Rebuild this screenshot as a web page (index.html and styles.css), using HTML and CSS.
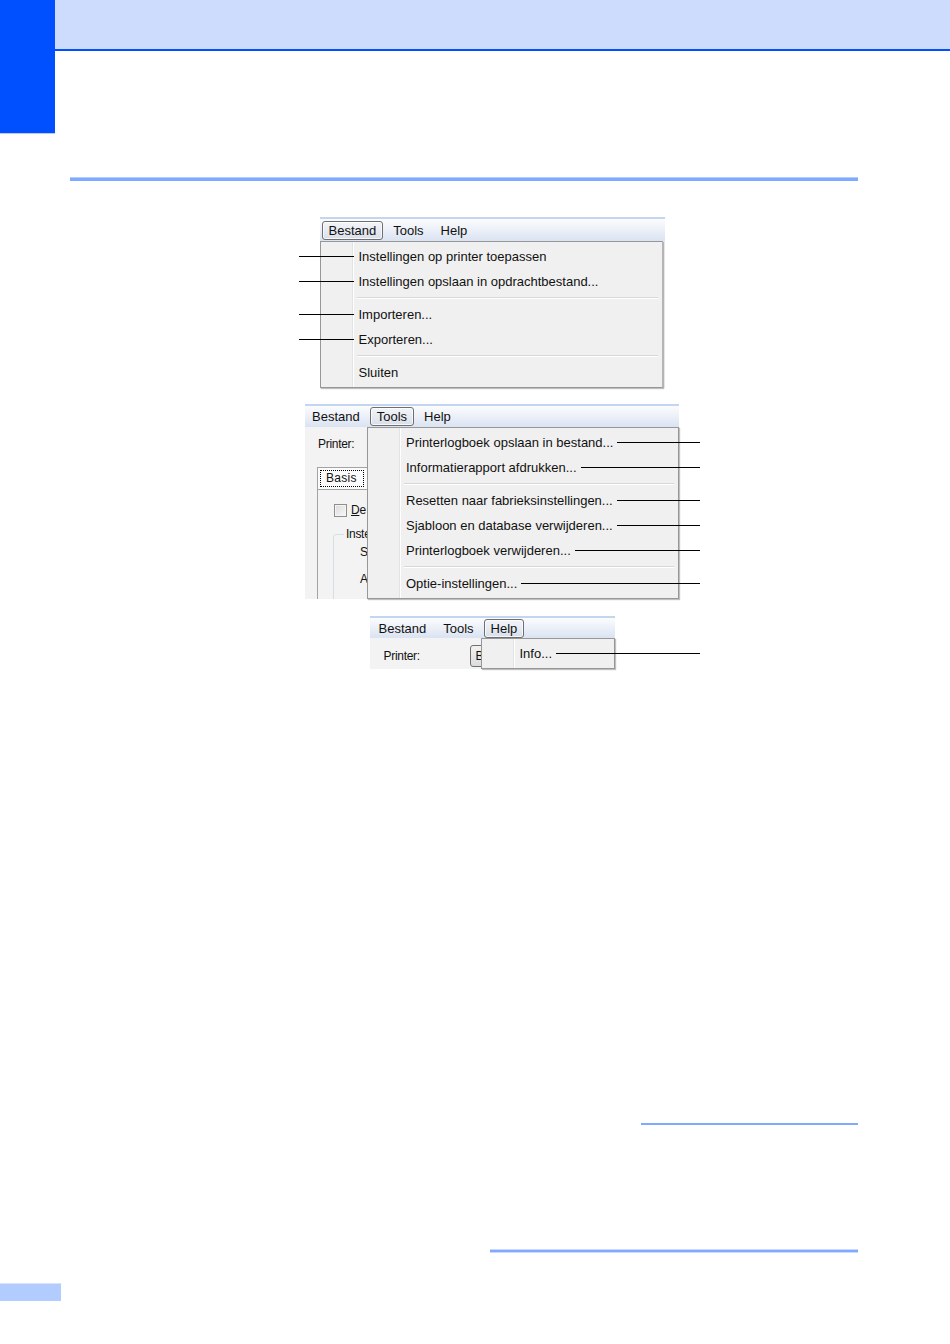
FILE: index.html
```html
<!DOCTYPE html>
<html lang="nl">
<head>
  <meta charset="UTF-8">
  <meta name="viewport" content="width=device-width, initial-scale=1.0">
  <title>Menu's - Printerinstellingen</title>
  <link rel="stylesheet" href="styles.css">
</head>
<body>
  <header class="page-head">
    <div class="chapter-tab"></div>
    <div class="head-band"></div>
  </header>

  <div class="section-rule"></div>

  <main class="figures">
    <!-- Bestand menu -->
    <div class="shot shot-file">
      <div class="menubar">
        <span class="mb-item active">Bestand</span>
        <span class="mb-item">Tools</span>
        <span class="mb-item">Help</span>
      </div>
      <div class="dropdown">
        <div class="mi lead"><span class="callout"></span><span>Instellingen op printer toepassen</span></div>
        <div class="mi lead"><span class="callout"></span><span>Instellingen opslaan in opdrachtbestand...</span></div>
        <div class="msep"></div>
        <div class="mi lead"><span class="callout"></span><span>Importeren...</span></div>
        <div class="mi lead"><span class="callout"></span><span>Exporteren...</span></div>
        <div class="msep"></div>
        <div class="mi"><span>Sluiten</span></div>
      </div>
    </div>

    <!-- Tools menu -->
    <div class="shot shot-tools">
      <div class="menubar">
        <span class="mb-item">Bestand</span>
        <span class="mb-item active">Tools</span>
        <span class="mb-item">Help</span>
      </div>
      <div class="shot-body">
        <div class="pane">
          <div class="label-row">Printer:</div>
          <div class="tab"><span class="focus">Basis</span></div>
          <div class="tab-page">
            <div class="check-row"><span class="checkbox"></span><span><u>D</u>e</span></div>
            <fieldset class="group">
              <legend>Inste</legend>
              <div class="group-row">S</div>
              <div class="group-row">A</div>
            </fieldset>
          </div>
        </div>
        <div class="dropdown trail">
          <div class="mi"><span>Printerlogboek opslaan in bestand...</span><span class="callout"></span></div>
          <div class="mi"><span>Informatierapport afdrukken...</span><span class="callout"></span></div>
          <div class="msep"></div>
          <div class="mi"><span>Resetten naar fabrieksinstellingen...</span><span class="callout"></span></div>
          <div class="mi"><span>Sjabloon en database verwijderen...</span><span class="callout"></span></div>
          <div class="mi"><span>Printerlogboek verwijderen...</span><span class="callout"></span></div>
          <div class="msep"></div>
          <div class="mi"><span>Optie-instellingen...</span><span class="callout"></span></div>
        </div>
      </div>
    </div>

    <!-- Help menu -->
    <div class="shot shot-help">
      <div class="menubar">
        <span class="mb-item">Bestand</span>
        <span class="mb-item">Tools</span>
        <span class="mb-item active">Help</span>
      </div>
      <div class="shot-body">
        <div class="pane pane-row">
          <span class="label-fixed">Printer:</span>
          <span class="button">Brother</span>
        </div>
        <div class="dropdown trail">
          <div class="mi"><span>Info...</span><span class="callout"></span></div>
        </div>
      </div>
    </div>
  </main>

  <footer class="page-foot">
    <div class="foot-rule-short"></div>
    <div class="foot-rule-long"></div>
    <div class="page-tab"></div>
  </footer>
</body>
</html>
```

FILE: styles.css
```css
:root {
  --brand-blue: #0050ff;
  --band-blue: #cddcfd;
  --rule-blue: #80aaff;
  --rule-light: #c9d8ff;
  --menu-bg: #f0f0f0;
  --menu-border: #979797;
  --text: #111111;
}

* {
  margin: 0;
  padding: 0;
  box-sizing: border-box;
}

body {
  width: 950px;
  min-height: 1344px;
  background: #ffffff;
  color: var(--text);
  font-family: 'Liberation Sans', Arial, sans-serif;
}

/* page header */
.page-head {
  display: flex;
  align-items: flex-start;
}

.chapter-tab {
  width: 55px;
  height: 134px;
  background: var(--brand-blue);
  border-bottom: 1px solid #b9ccf9;
}

.head-band {
  flex: 1;
  height: 51px;
  background: var(--band-blue);
  border-bottom: 2px solid var(--brand-blue);
}

.section-rule {
  margin: 43px 0 0 70px;
  width: 788px;
  height: 4px;
  background: var(--rule-blue);
  border-top: 1px solid #b3ccff;
}

/* screenshots */
.figures {
  display: flex;
  flex-direction: column;
  align-items: center;
  gap: 16px;
  margin-top: 36px;
  padding-left: 34px;
  font-size: 12px;
}

.shot {
  display: flex;
  flex-direction: column;
  background: var(--menu-bg);
}

.shot-file { width: 345px; }
.shot-tools { width: 374px; }
.shot-help { width: 245px; margin-top: 1px; }

.menubar {
  display: flex;
  align-items: center;
  gap: 3px;
  height: 24px;
  padding-left: 2px;
  border-top: 2px solid #c4d6ef;
  background: linear-gradient(#fbfcfe, #edf1f8 45%, #dae3f2);
}

.shot-tools .menubar { height: 23px; padding-left: 0; }
.shot-help .menubar { height: 22px; }

.mb-item {
  height: 19px;
  line-height: 17px;
  padding: 0 6px;
  border: 1px solid transparent;
  border-radius: 3px;
  font-size: 13px;
  white-space: nowrap;
}

.mb-item.active {
  border-color: #6f6f6f;
  background: linear-gradient(#f3f5f9, #d9dfea);
  box-shadow: inset 0 0 0 1px rgba(255, 255, 255, 0.7);
}

.shot-body {
  display: flex;
  flex: 1;
}

/* dropdown menus */
.dropdown {
  --reach: 0px;
  display: flex;
  flex-direction: column;
  padding: 2px;
  border: 1px solid var(--menu-border);
  background:
    linear-gradient(to right, transparent 31px, #e2e3e3 31px, #e2e3e3 32px, #ffffff 32px, #ffffff 33px, transparent 33px),
    var(--menu-bg);
  box-shadow: 1px 1px 1px rgba(0, 0, 0, 0.25);
  font-size: 13px;
}

.shot-file .dropdown {
  border-right-color: #b5b5b5;
  margin-right: 2px;
}

.shot-tools .dropdown { width: 312px; --reach: 24px; }
.shot-help .dropdown { width: 134px; --reach: 88px; }

.mi {
  display: flex;
  align-items: center;
  height: 25px;
  padding-left: 36px;
  white-space: nowrap;
}

.mi.lead {
  margin-left: -24px;
  padding-left: 0;
}

.mi.lead .callout {
  flex: none;
  width: 55px;
  margin-right: 5px;
}

.trail .mi {
  margin-right: calc(0px - var(--reach));
}

.trail .callout {
  flex: 1;
  margin-left: 4px;
}

.callout {
  height: 1px;
  background: #000000;
}

.msep {
  height: 2px;
  margin: 3px 2px 3px 34px;
  border-top: 1px solid #d7d7d7;
  border-bottom: 1px solid #ffffff;
}

/* dialog behind the menus */
.pane {
  overflow: hidden;
  background: #f3f3f3;
  font-size: 12px;
  letter-spacing: -0.3px;
}

.shot-tools .pane {
  width: 62px;
  padding: 9px 0 0 12px;
}

.label-row {
  height: 16px;
  line-height: 16px;
  margin-left: 1px;
}

.tab {
  width: 60px;
  height: 22px;
  margin-top: 15px;
  padding: 2px 0 0 2px;
  border: 1px solid #a3a3a3;
  border-bottom: none;
  background: #fbfbfb;
}

.focus {
  display: block;
  width: 44px;
  height: 17px;
  line-height: 15px;
  padding-left: 5px;
  border: 1px dotted #000000;
  letter-spacing: 0.3px;
}

.tab-page {
  width: 80px;
  height: 110px;
  border-left: 1px solid #a3a3a3;
  border-top: 1px solid #a3a3a3;
  padding: 13px 0 0 15px;
}

.check-row {
  display: flex;
  align-items: center;
  gap: 4px;
  margin-left: 1px;
}

.checkbox {
  width: 13px;
  height: 13px;
  border: 1px solid #8f8f8f;
  background: linear-gradient(135deg, #dcdcdc, #f7f7f7);
  box-shadow: inset 0 0 0 1px #f4f4f4;
}

.group {
  width: 80px;
  height: 90px;
  margin-top: 10px;
  padding: 0 0 0 26px;
  border: 1px solid #d5dfe5;
  border-radius: 3px;
}

.group legend {
  margin-left: -16px;
  padding: 0 2px;
  line-height: 14px;
}

.group-row {
  height: 14px;
  line-height: 14px;
  margin-top: 4px;
}

.group-row + .group-row {
  margin-top: 13px;
}

.shot-help .pane {
  width: 111px;
}

.pane-row {
  display: flex;
  align-items: center;
  padding: 5px 0 0 14px;
}

.label-fixed {
  flex: none;
  width: 86px;
}

.button {
  flex: none;
  height: 22px;
  line-height: 20px;
  padding: 0 5px;
  border: 1px solid #707070;
  border-radius: 3px;
  background: linear-gradient(#f2f2f2, #dcdcdc);
}

/* page footer */
.page-foot {
  display: flex;
  flex-direction: column;
}

.foot-rule-short {
  width: 217px;
  height: 2px;
  margin: 454px 0 0 641px;
  background: var(--rule-blue);
}

.foot-rule-long {
  width: 368px;
  height: 4px;
  margin: 124px 0 0 490px;
  background: var(--rule-blue);
  border-top: 1px solid var(--rule-light);
  border-bottom: 1px solid var(--rule-light);
}

.page-tab {
  width: 61px;
  height: 18px;
  margin-top: 30px;
  background: #b3ccff;
  border-top: 1px solid #d6e2ff;
}
```
